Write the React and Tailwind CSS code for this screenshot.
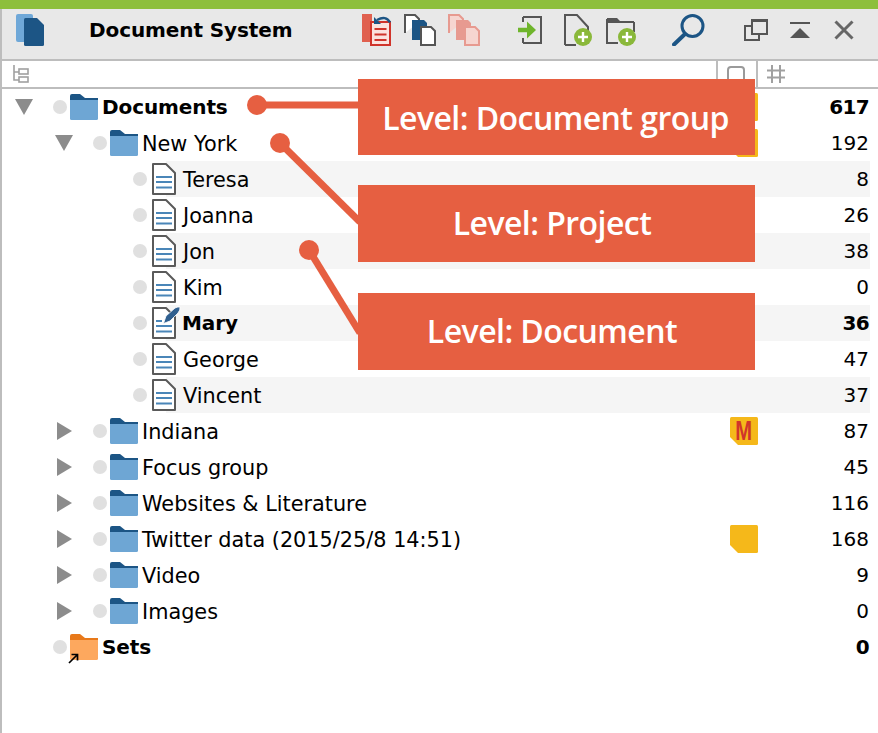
import React from 'react';

const font = "font-['DejaVu_Sans',sans-serif]";

const AppIcon = () => (
  <svg width="28" height="32" viewBox="0 0 28 32" className="ml-[14px] shrink-0">
    <rect x="0" y="0" width="17" height="28" rx="2" fill="#6fa8d8" />
    <path d="M9.5 4H21L28 11V30.5Q28 32 26.5 32H9.5Q8 32 8 30.5V5.5Q8 4 9.5 4Z" fill="#1c5585" />
  </svg>
);

const ClipboardIcon = () => (
  <svg width="29" height="32" viewBox="0 0 29 32" className="shrink-0">
    <rect x="0" y="0" width="10" height="28" fill="#e0604f" />
    <rect x="9" y="8" width="19" height="23" fill="#fbe3df" stroke="#d0342b" strokeWidth="2" />
    <path d="M12.5 15H24.5M12.5 20.5H24.5M12.5 26H24.5" stroke="#d0342b" strokeWidth="2" />
    <path d="M12 3L12 10L19 10Z" fill="#1c5585" />
    <path d="M15 6Q24 1 28 8.5" fill="none" stroke="#1c5585" strokeWidth="2.4" />
  </svg>
);

const CopyIcon = ({ outline, fill, mid, back, className }) => (
  <svg width="32" height="32" viewBox="0 0 32 32" className={className}>
    <path d="M1 19V1H11L15 5V8" fill={back} stroke={outline} strokeWidth="2" />
    <path d="M8 6H20L23 9V26H8Z" fill={mid} />
    <path d="M17 13H27L31 17V31H17Z" fill={fill} stroke={outline} strokeWidth="2" />
  </svg>
);

const ImportIcon = () => (
  <svg width="24" height="28" viewBox="0 0 24 28" className="ml-[38px] shrink-0">
    <path d="M5 1H23V27H5M5 1V6M5 22V27" fill="none" stroke="#555" strokeWidth="2" />
    <path d="M0 14H10" stroke="#6fb52c" strokeWidth="4.5" />
    <path d="M9 5.5L18 14L9 22.5Z" fill="#6fb52c" />
  </svg>
);

const PlusBadge = ({ cx, cy }) => (
  <g>
    <circle cx={cx} cy={cy} r="9" fill="#8ab83a" />
    <path d={`M${cx - 5} ${cy}H${cx + 5}M${cx} ${cy - 5}V${cy + 5}`} stroke="#fff" strokeWidth="2.4" />
  </g>
);

const NewDocIcon = () => (
  <svg width="28" height="32" viewBox="0 0 28 32" className="ml-[22px] shrink-0">
    <path d="M1 31V1H13L24 13V22M1 31H12" fill="none" stroke="#555" strokeWidth="2" />
    <PlusBadge cx={19} cy={23} />
  </svg>
);

const NewFolderIcon = () => (
  <svg width="30" height="32" viewBox="0 0 30 32" className="ml-[14px] shrink-0">
    <path d="M1 4H11L14 7H28V9H1Z" fill="#555" />
    <path d="M1 5V29H12M28 8V18" fill="none" stroke="#555" strokeWidth="2" />
    <PlusBadge cx={21} cy={23} />
  </svg>
);

const SearchIcon = () => (
  <svg width="33" height="32" viewBox="0 0 33 32" className="ml-[36px] shrink-0">
    <circle cx="20.5" cy="12" r="10.5" fill="none" stroke="#1c5585" strokeWidth="3" />
    <path d="M13 20L2 30.5" stroke="#1c5585" strokeWidth="4" strokeLinecap="round" />
  </svg>
);

const WindowIcon = () => (
  <svg width="24" height="22" viewBox="0 0 24 22" className="ml-[39px] shrink-0">
    <rect x="1" y="7" width="14" height="14" fill="none" stroke="#555" strokeWidth="2" />
    <rect x="8" y="1" width="15" height="14" fill="#e8e8e8" stroke="#555" strokeWidth="2" />
    <path d="M8 1H23V3H8Z" fill="#555" />
  </svg>
);

const CollapseIcon = () => (
  <svg width="20" height="16" viewBox="0 0 20 16" className="ml-[22px] shrink-0">
    <path d="M0 1H20" stroke="#555" strokeWidth="2" />
    <path d="M0 16L10 6L20 16Z" fill="#555" />
  </svg>
);

const CloseIcon = () => (
  <svg width="20" height="20" viewBox="0 0 20 20" className="ml-[24px] shrink-0">
    <path d="M1.5 1.5L18.5 18.5M18.5 1.5L1.5 18.5" stroke="#666" strokeWidth="3" />
  </svg>
);

const TreeIcon = () => (
  <svg width="16" height="18" viewBox="0 0 16 18" className="ml-[11px]">
    <path d="M1 0V15H6M1 7H6" fill="none" stroke="#a0a0a0" strokeWidth="1.6" />
    <rect x="6" y="4" width="9" height="5" fill="none" stroke="#a0a0a0" strokeWidth="1.6" />
    <rect x="6" y="12" width="9" height="5" fill="none" stroke="#a0a0a0" strokeWidth="1.6" />
  </svg>
);

const HashIcon = () => (
  <svg width="18" height="18" viewBox="0 0 18 18" className="ml-[9px]">
    <path d="M5 0V18M13 0V18M0 5.5H18M0 12.5H18" stroke="#a0a0a0" strokeWidth="2" />
  </svg>
);

const Folder = ({ back = '#1c5585', body = '#6ea6d4' }) => (
  <svg width="28" height="26" viewBox="0 0 28 26" className="shrink-0">
    <path d="M0 6V2Q0 0 2 0H10L15 4H28V7H0Z" fill={back} />
    <path d="M0 6H28V24.5Q28 26 26.5 26H1.5Q0 26 0 24.5Z" fill={body} />
  </svg>
);

const SetsFolder = () => (
  <span className="relative shrink-0 flex">
    <Folder back="#e8791a" body="#fda85e" />
    <svg width="12" height="12" viewBox="0 0 12 12" className="absolute left-[-2px] bottom-[-4px]">
      <path d="M1 11L9 3M3.5 2.5H9.5V8.5" fill="none" stroke="#000" strokeWidth="1.7" />
    </svg>
  </span>
);

const DocIcon = ({ edit }) => (
  <svg width="24" height="32" viewBox="0 0 24 32" className="shrink-0 overflow-visible">
    <path d="M1 1H14L23 10V31H1Z" fill="#fff" stroke="#5a5a5a" strokeWidth="2" strokeLinejoin="round" />
    {edit ? (
      <>
        <path d="M4 14H10M4 19H20M4 24.5H20" stroke="#4a86b8" strokeWidth="2" />
        <path d="M11.5 16.5L14 9L23 1Q26 -0.5 28 0Q28.5 3 26 6L18 14Z" fill="#2f5f8f" stroke="#fff" strokeWidth="0.8" />
      </>
    ) : (
      <path d="M4 14H20M4 19H20M4 24.5H20" stroke="#4a86b8" strokeWidth="2" />
    )}
  </svg>
);

const Dot = () => <span className="size-[14px] rounded-full bg-[#e0e0e0] shrink-0" />;

const TriangleDown = () => (
  <svg width="18" height="16" viewBox="0 0 18 16" className="shrink-0">
    <path d="M0 0H18L9 16Z" fill="#8c8c8c" />
  </svg>
);

const TriangleRight = () => (
  <svg width="18" height="18" viewBox="0 0 18 18" className="shrink-0">
    <path d="M2 0L17 9L2 18Z" fill="#8c8c8c" />
  </svg>
);

const Note = ({ letter }) => (
  <span className="relative w-[28px] h-[28px] shrink-0 flex items-center justify-center">
    <svg width="28" height="28" viewBox="0 0 28 28" className="absolute inset-0">
      <path d="M1.5 0H26.5Q28 0 28 1.5V26.5Q28 28 26.5 28H8L0 20V1.5Q0 0 1.5 0Z" fill="#f5b81a" />
    </svg>
    {letter && <span className="relative font-['Liberation_Sans',sans-serif] font-bold text-[28px] leading-none scale-x-[0.72] text-[#d0352a]">{letter}</span>}
  </span>
);

const Count = ({ value, bold, note, letter }) => (
  <div className="ml-auto flex items-center text-[20px]">
    {note && <Note letter={letter} />}
    <span className={`w-[112px] text-right pr-[1px] ${bold ? 'font-bold tracking-[-0.7px]' : ''}`}>{value}</span>
  </div>
);

const GroupRow = ({ name, count, open, level = 1, bold, note, letter, sets }) => (
  <div className={`h-9 flex items-center mr-2 ${level === 0 ? (sets ? 'pl-[51px]' : 'pl-[13px]') : 'pl-[53px]'}`}>
    {!sets && (
      <span className="w-[18px] flex justify-center">
        {open ? <TriangleDown /> : <TriangleRight />}
      </span>
    )}
    <span className={`flex items-center gap-[3px] ${sets ? '' : 'ml-[20px]'}`}>
      <Dot />
      {sets ? <SetsFolder /> : <Folder />}
    </span>
    <span className={`ml-1 whitespace-nowrap ${bold ? 'font-bold text-[20px] tracking-[-0.1px]' : 'pt-[2px]'}`}>{name}</span>
    <Count value={count} bold={bold} note={note} letter={letter} />
  </div>
);

const DocRow = ({ name, count, striped, edit, bold }) => (
  <div className={`h-9 ml-[164px] mr-2 flex items-center ${striped ? 'bg-[#f5f5f5]' : ''}`}>
    <span className="-ml-[33px] flex items-center gap-[5px]">
      <Dot />
      <DocIcon edit={edit} />
    </span>
    <span className={`whitespace-nowrap ${bold ? 'ml-[6px] font-bold text-[20px] tracking-[-0.1px]' : 'ml-[7px] pt-[2px]'}`}>{name}</span>
    <Count value={count} bold={bold} />
  </div>
);

const Callout = ({ className, children }) => (
  <div className={`absolute left-[358px] w-[397px] bg-[#e65f41] flex items-center justify-center text-white font-['Open_Sans',sans-serif] font-semibold text-[32px] tracking-[-0.55px] ${className}`}>
    {children}
  </div>
);

const documents = [
  { name: 'Teresa', count: 8, striped: true },
  { name: 'Joanna', count: 26 },
  { name: 'Jon', count: 38, striped: true },
  { name: 'Kim', count: 0 },
  { name: 'Mary', count: 36, striped: true, edit: true, bold: true },
  { name: 'George', count: 47 },
  { name: 'Vincent', count: 37, striped: true },
];

const groups = [
  { name: 'Indiana', count: 87, note: true, letter: 'M' },
  { name: 'Focus group', count: 45 },
  { name: 'Websites & Literature', count: 116 },
  { name: 'Twitter data (2015/25/8 14:51)', count: 168, note: true },
  { name: 'Video', count: 9 },
  { name: 'Images', count: 0 },
];

export default function App() {
  return (
    <div className={`relative min-h-screen flex flex-col bg-white text-black overflow-hidden ${font}`}>
      <div className="h-[9px] bg-[#8dbf3c]" />
      <div className="flex-1 border-l-2 border-[#bdbdbd]">
        <header className="h-[52px] pb-2 bg-[#e8e8e8] border-b-2 border-[#bdbdbd] flex items-center">
          <AppIcon />
          <h1 className="ml-[45px] w-[273px] text-[20px] font-bold tracking-[-0.1px]">Document System</h1>
          <ClipboardIcon />
          <CopyIcon outline="#555" fill="#fff" mid="#1c5585" back="#fff" className="ml-[13px] shrink-0" />
          <CopyIcon outline="#e79a90" fill="#f6d5d0" mid="#e79a90" back="#f6d5d0" className="ml-[12px] shrink-0" />
          <ImportIcon />
          <NewDocIcon />
          <NewFolderIcon />
          <SearchIcon />
          <WindowIcon />
          <CollapseIcon />
          <CloseIcon />
        </header>
        <div className="h-[28px] border-b-2 border-[#bdbdbd] flex">
          <div className="flex-1 flex items-center"><TreeIcon /></div>
          <div className="w-[40px] border-l-2 border-[#bdbdbd] pl-[9px] pt-[5px]">
            <div className="w-[18px] h-[18px] border-2 border-[#9a9a9a] rounded-sm" />
          </div>
          <div className="w-[122px] border-l-2 border-[#bdbdbd] flex items-center"><HashIcon /></div>
        </div>
        <div className="text-[20.8px] leading-9">
          <GroupRow name="Documents" count={617} level={0} open bold note />
          <GroupRow name="New York" count={192} open note />
          {documents.map(doc => <DocRow key={doc.name} {...doc} />)}
          {groups.map(group => <GroupRow key={group.name} {...group} />)}
          <GroupRow name="Sets" count={0} level={0} bold sets />
        </div>
      </div>

      <svg width="878" height="733" viewBox="0 0 878 733" className="absolute inset-0 pointer-events-none">
        <g fill="#e65f41" stroke="#e65f41" strokeWidth="7">
          <path d="M257 105H360" />
          <path d="M280 143L360 222" />
          <path d="M309 250L360 333" />
        </g>
        <g fill="#e65f41">
          <circle cx="257" cy="105" r="10" />
          <circle cx="280" cy="143" r="10" />
          <circle cx="309" cy="250" r="10" />
        </g>
      </svg>
      <Callout className="top-[79px] h-[76px] pt-[2px] pr-[2px]">Level: Document group</Callout>
      <Callout className="top-[185px] h-[77px] pb-[1px] pr-[9px]">Level: Project</Callout>
      <Callout className="top-[293px] h-[77px] pb-[1px] pr-[9px]">Level: Document</Callout>
    </div>
  );
}
